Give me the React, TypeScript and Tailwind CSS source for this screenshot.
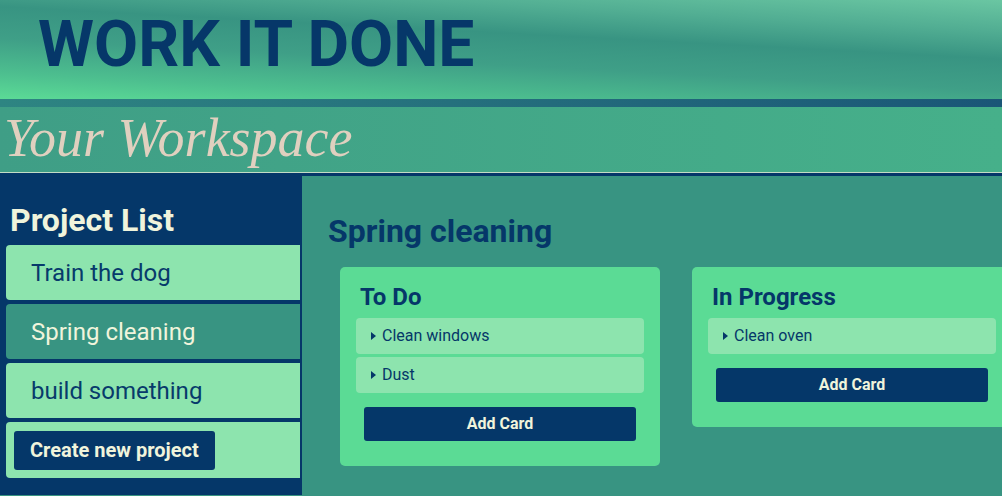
import React from 'react';

const projects = [
  { id: 1, name: 'Train the dog' },
  { id: 2, name: 'Spring cleaning' },
  { id: 3, name: 'build something' },
];

const columns = [
  { title: 'To Do', cards: ['Clean windows', 'Dust'] },
  { title: 'In Progress', cards: ['Clean oven'] },
];

function Column({ title, cards }: { title: string; cards: string[] }) {
  return (
    <div className="w-[320px] shrink-0 self-start rounded-[5px] bg-[#5bdb95] px-4 pt-4 pb-[25px]">
      <h3 className="mb-[7px] pl-1 text-[24px] font-bold leading-[28px] text-[#053769]">{title}</h3>
      <div className="flex flex-col gap-[3px]">
        {cards.map((card) => (
          <div
            key={card}
            className="flex h-9 items-center gap-[6px] rounded-[4px] bg-[#8de4ae] pl-[15px] text-[16px] text-[#053769]"
          >
            <span className="h-0 w-0 border-y-4 border-l-[5px] border-y-transparent border-l-[#053769]" />
            {card}
          </div>
        ))}
      </div>
      <button className="mx-2 mt-[14px] flex h-[34px] w-[272px] items-center justify-center rounded-[3px] bg-[#053769] text-[16px] font-bold text-[#f0f4dc]">
        Add Card
      </button>
    </div>
  );
}

export default function App() {
  const activeId = 2;

  return (
    <div className="h-[496px] w-[1002px] overflow-hidden bg-[#389482] font-['Roboto',sans-serif]">
      <header className="h-[99px] bg-[linear-gradient(183deg,#6ac6a2_0%,#52ae93_20%,#389482_39%,#3f9f87_60%,#4dbf8f_83%,#5bdb96_100%)] pl-[38px] pt-[13px]">
        <h1 className="text-[64px] font-bold leading-[64px] text-[#063769]">WORK IT DONE</h1>
      </header>
      <div className="h-2 bg-[linear-gradient(90deg,#2e8582,#1a5677)]" />
      <div className="h-[66px] border-b border-[#c4dcc6] bg-[linear-gradient(90deg,#3f9e86,#46b08a)] pl-[4px]">
        <h2 className="font-['Liberation_Serif',serif] text-[54px] italic leading-[62px] text-[#e0d0bf]">
          Your Workspace
        </h2>
      </div>

      <div className="flex h-[322px] bg-[#053769]">
        <aside className="w-[302px] shrink-0 rounded-tl-[4px] pl-[6px] pr-[2px] pt-[27px]">
          <h2 className="mb-[5px] pl-1 text-[32px] font-bold leading-10 text-[#f0f4dc]">Project List</h2>
          <ul className="flex flex-col gap-[4px]">
            {projects.map((p) => (
              <li
                key={p.id}
                className={
                  p.id === activeId
                    ? 'flex h-[55px] items-center rounded-l-[4px] bg-[#389482] pl-[25px] text-[24px] text-[#f0f4dc]'
                    : 'flex h-[55px] items-center rounded-l-[4px] bg-[#8de4ae] pl-[25px] text-[24px] text-[#073a6b]'
                }
              >
                {p.name}
              </li>
            ))}
            <li className="flex h-[56px] items-center rounded-l-[4px] bg-[#8de4ae] pl-2">
              <button className="h-[39px] rounded-[3px] bg-[#053769] px-4 text-[20px] font-bold text-[#f0f4dc]">
                Create new project
              </button>
            </li>
          </ul>
        </aside>

        <main className="mt-[3px] flex-1 bg-[#389482] pl-[26px] pt-[35px]">
          <h2 className="text-[32px] font-bold leading-10 text-[#053769]">Spring cleaning</h2>
          <div className="mt-4 flex gap-8 pl-3">
            {columns.map((c) => (
              <Column key={c.title} title={c.title} cards={c.cards} />
            ))}
          </div>
        </main>
      </div>
    </div>
  );
}
